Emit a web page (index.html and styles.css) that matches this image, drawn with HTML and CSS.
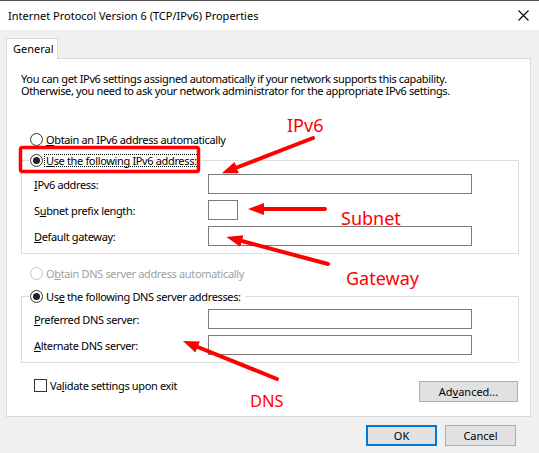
FILE: index.html
```html
<!DOCTYPE html>
<html>
<head>
<meta charset="utf-8">
<title>Internet Protocol Version 6 (TCP/IPv6) Properties</title>
<link rel="stylesheet" href="styles.css">
</head>
<body>
<div class="window">
  <div class="titlebar">
    <span class="title">Internet Protocol Version 6 (TCP/IPv6) Properties</span>
    <span class="close"><svg width="11" height="11" viewBox="0 0 11 11"><path d="M0.5 0.5 L10.5 10.5 M10.5 0.5 L0.5 10.5" stroke="#000" stroke-width="1.1" fill="none"/></svg></span>
  </div>
  <div class="tabs"><div class="tab">General</div></div>
  <div class="panel">
    <p class="intro">You can get IPv6 settings assigned automatically if your network supports this capability.<br>Otherwise, you need to ask your network administrator for the appropriate IPv6 settings.</p>
    <div class="opt first"><span class="radio"></span><span class="lbl"><u>O</u>btain an IPv6 address automatically</span></div>
    <fieldset class="group g1">
      <legend class="opt"><span class="radio on"></span><span class="lbl focus"><u>U</u>se the following IPv6 address:</span></legend>
      <div class="field"><span class="flabel"><u>I</u>Pv6 address:</span><span class="input wide"></span></div>
      <div class="field"><span class="flabel">S<u>u</u>bnet prefix length:</span><span class="input small"></span></div>
      <div class="field"><span class="flabel"><u>D</u>efault gateway:</span><span class="input wide"></span></div>
    </fieldset>
    <div class="opt dis"><span class="radio"></span><span class="lbl">O<u>b</u>tain DNS server address automatically</span></div>
    <fieldset class="group g2">
      <legend class="opt"><span class="radio on"></span><span class="lbl">Us<u>e</u> the following DNS server addresses:</span></legend>
      <div class="field"><span class="flabel"><u>P</u>referred DNS server:</span><span class="input wide"></span></div>
      <div class="field"><span class="flabel"><u>A</u>lternate DNS server:</span><span class="input wide"></span></div>
    </fieldset>
    <div class="bottomrow">
      <div class="check"><span class="box"></span><span class="clbl">Va<u>l</u>idate settings upon exit</span></div>
      <div class="btn adv">Ad<u>v</u>anced...</div>
    </div>
  </div>
  <div class="footer">
    <div class="btn ok">OK</div>
    <div class="btn">Cancel</div>
  </div>
</div>
<svg class="annot" width="539" height="453" viewBox="0 0 539 453">
  <defs>
    <marker id="ah" markerUnits="userSpaceOnUse" markerWidth="16" markerHeight="12" refX="4" refY="6" orient="auto">
      <path d="M0,0 L16,6 L0,12 z" fill="#f00"/>
    </marker>
  </defs>
  <rect x="20.5" y="147.5" width="178" height="24" rx="2" fill="none" stroke="#f00" stroke-width="3.5"/>
  <line x1="313" y1="138" x2="233" y2="169" class="arrow" marker-end="url(#ah)"/>
  <line x1="325" y1="209" x2="260" y2="209" class="arrow" marker-end="url(#ah)"/>
  <line x1="328" y1="264" x2="238" y2="240" class="arrow" marker-end="url(#ah)"/>
  <line x1="277" y1="379" x2="194" y2="345.5" class="arrow" marker-end="url(#ah)"/>
  <text x="287" y="132" class="note">IPv6</text>
  <text x="341" y="225" class="note">Subnet</text>
  <text x="346" y="285" class="note">Gateway</text>
  <text x="250" y="407" class="note small">DNS</text>
</svg>
</body>
</html>
```
FILE: styles.css
```css
html, body {
  margin: 0;
  padding: 0;
}
body {
  width: 539px;
  height: 453px;
  overflow: hidden;
  background: #f0f0f0;
  font-family: "Noto Sans", "Segoe UI", sans-serif;
  font-size: 11px;
  letter-spacing: -0.35px;
  color: #000;
  position: relative;
}
u {
  text-decoration: underline;
  text-underline-offset: 1px;
}
.titlebar {
  height: 29px;
  border-top: 1px solid #555;
  background: #fff;
  display: flex;
  align-items: center;
  justify-content: space-between;
  padding: 0 10px 0 8px;
}
.title {
  font-size: 11px;
  line-height: 14px;
  letter-spacing: 0;
}
.close {
  display: flex;
  width: 11px;
  height: 11px;
}
.tabs {
  padding: 8px 0 0 6px;
  display: flex;
}
.tab {
  width: 52px;
  height: 21px;
  box-sizing: border-box;
  border: 1px solid #d9d9d9;
  border-bottom: none;
  background: #fff;
  padding: 2px 0 0 6px;
  line-height: 16px;
  letter-spacing: 0;
  margin-bottom: -1px;
  position: relative;
  z-index: 1;
}
.panel {
  margin-left: 6px;
  width: 525px;
  height: 359px;
  box-sizing: border-box;
  border: 1px solid #d9d9d9;
  background: #fff;
  padding: 0 11px 0 14px;
  display: flex;
  flex-direction: column;
}
.intro {
  margin: 14px 0 0;
  line-height: 12px;
  white-space: nowrap;
}
.opt {
  display: flex;
  align-items: center;
  height: 16px;
  padding-left: 9px;
}
.opt.first {
  margin-top: 34px;
}
.opt.dis {
  margin-top: 11px;
  color: #a0a0a0;
}
.radio {
  width: 13px;
  height: 13px;
  box-sizing: border-box;
  border: 1px solid #333;
  border-radius: 50%;
  background: #fff;
  display: flex;
  align-items: center;
  justify-content: center;
  flex: none;
}
.radio.on::after {
  content: "";
  width: 7px;
  height: 7px;
  border-radius: 50%;
  background: #222;
}
.dis .radio {
  border-color: #c4c4c4;
}
.lbl {
  margin-left: 1px;
  padding: 0 1px;
  border: 1px solid transparent;
  line-height: 11px;
  white-space: nowrap;
}
.lbl.focus {
  border: 1px dotted #000;
}
.group {
  margin: 0;
  padding: 0 0 7px 0;
  border: 1px solid #dcdcdc;
  min-inline-size: 0;
  display: flex;
  flex-direction: column;
  gap: 6px;
}
.group legend {
  margin-left: 7px;
  padding: 0 2px 0 1px;
}
.g1 {
  margin-top: 5px;
  padding-top: 6px;
}
.g2 {
  margin-top: 7px;
  padding-top: 5px;
}
.field {
  display: flex;
  align-items: center;
  height: 20px;
  padding-left: 12px;
}
.flabel {
  width: 174px;
  flex: none;
  white-space: nowrap;
}
.input {
  height: 20px;
  box-sizing: border-box;
  border: 1px solid #7a7a7a;
  background: #fff;
}
.input.wide {
  width: 264px;
}
.input.small {
  width: 30px;
}
.bottomrow {
  margin-top: 16px;
  display: flex;
  justify-content: space-between;
  align-items: flex-start;
}
.check {
  display: flex;
  align-items: center;
  padding-left: 13px;
  height: 13px;
}
.box {
  width: 13px;
  height: 13px;
  box-sizing: border-box;
  border: 1px solid #333;
  background: #fff;
}
.clbl {
  margin-left: 3px;
  white-space: nowrap;
}
.btn {
  height: 21px;
  width: 71px;
  box-sizing: border-box;
  border: 1px solid #adadad;
  background: #e1e1e1;
  display: flex;
  align-items: center;
  justify-content: center;
  white-space: nowrap;
  letter-spacing: 0;
}
.btn.adv {
  width: 99px;
  margin-top: 2px;
  margin-right: 1px;
}
.btn.ok {
  border: 2px solid #0078d7;
}
.footer {
  margin-top: 8px;
  display: flex;
  justify-content: flex-end;
  gap: 8px;
  padding-right: 23px;
}
.annot {
  position: absolute;
  top: 0;
  left: 0;
  pointer-events: none;
}
.arrow {
  stroke: #f00;
  stroke-width: 4;
  stroke-linecap: round;
}
.note {
  fill: #f00;
  font-family: "Noto Sans", sans-serif;
  font-size: 18px;
  letter-spacing: 0;
}
.note.small {
  font-size: 16.5px;
}
```
